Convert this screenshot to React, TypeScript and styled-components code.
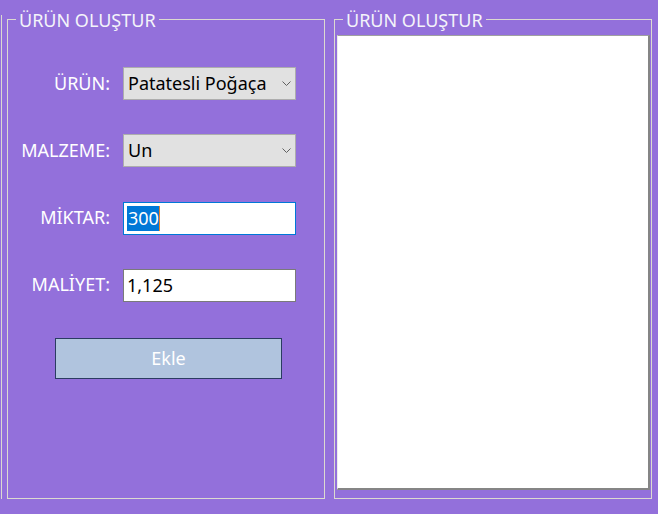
import React from "react";
import styled, { createGlobalStyle } from "styled-components";

const Global = createGlobalStyle`
  html, body { margin: 0; padding: 0; }
  body {
    background: #9370db;
    width: 658px;
    height: 514px;
    overflow: hidden;
    font-family: "Noto Sans", "Open Sans", sans-serif;
  }
`;

const Window = styled.div`
  display: flex;
  align-items: flex-start;
  padding-top: 19px;
  height: 514px;
  box-sizing: border-box;
`;

const ClippedEdge = styled.div`
  width: 1px;
  height: 484px;
  margin-top: -4px;
  border-right: 1px solid #dcdad0;
  margin-right: 5px;
`;

const GroupBox = styled.section<{ $gap?: number }>`
  position: relative;
  box-sizing: border-box;
  width: 318px;
  height: 480px;
  border: 1px solid #dcdad0;
  margin-right: ${(p) => p.$gap ?? 0}px;
  display: flex;
  flex-direction: column;
`;

const Legend = styled.span`
  position: absolute;
  top: -12px;
  left: 8px;
  padding: 0 3px;
  background: #9370db;
  color: #f4f4fa;
  font-size: 18px;
  line-height: 24px;
  white-space: nowrap;
`;

const Form = styled.div`
  display: grid;
  grid-template-columns: 102px 173px;
  grid-auto-rows: 33px;
  column-gap: 13px;
  row-gap: 34.33px;
  padding-top: 47px;
`;

const Label = styled.label`
  color: #ffffff;
  font-size: 18px;
  text-align: right;
  align-self: center;
  white-space: nowrap;
  margin-top: -2px;
`;

const Combo = styled.div`
  box-sizing: border-box;
  display: flex;
  align-items: center;
  justify-content: space-between;
  background: #e1e1e1;
  border: 1px solid #adadad;
  padding: 0 4px 0 4px;
  font-size: 18px;
  color: #000;
`;

const FieldText = styled.span`
  white-space: nowrap;
  margin-top: -1px;
`;

const TextBox = styled.div<{ $focused?: boolean }>`
  box-sizing: border-box;
  display: flex;
  align-items: center;
  background: #ffffff;
  border: 1px solid ${(p) => (p.$focused ? "#0078d7" : "#7a7a7a")};
  padding-left: 3px;
  font-size: 18px;
  color: #000;
`;

const Selection = styled.span`
  background: #0078d7;
  color: #ffffff;
  line-height: 25px;
  height: 25px;
  padding-left: 1px;
  border-right: 1px solid #e8832a;
`;

const ButtonRow = styled.div`
  display: flex;
  padding-left: 47px;
  margin-top: 36px;
`;

const Button = styled.button`
  box-sizing: border-box;
  width: 227px;
  height: 41px;
  background: #b0c4de;
  border: 1px solid #2b3c62;
  color: #ffffff;
  font-family: inherit;
  font-size: 18px;
  padding: 0;
`;

const ListBox = styled.div`
  box-sizing: border-box;
  flex: 1;
  margin: 15px 1px 8px 2px;
  background: #ffffff;
  border-top: 1px solid #a0a0a0;
  border-left: 1px solid #ececec;
  border-right: 2px solid #858585;
  border-bottom: 2px solid #858585;
`;

const Chevron = () => (
  <svg width="9" height="5" viewBox="0 0 9 5">
    <polyline points="0.5,0.5 4.5,4.5 8.5,0.5" fill="none" stroke="#606060" strokeWidth="1" />
  </svg>
);

export default function App() {
  return (
    <>
      <Global />
      <Window>
        <ClippedEdge />
        <GroupBox $gap={9}>
          <Legend>ÜRÜN OLUŞTUR</Legend>
          <Form>
            <Label>ÜRÜN:</Label>
            <Combo>
              <FieldText>Patatesli Poğaça</FieldText>
              <Chevron />
            </Combo>
            <Label>MALZEME:</Label>
            <Combo>
              <FieldText>Un</FieldText>
              <Chevron />
            </Combo>
            <Label>MİKTAR:</Label>
            <TextBox $focused>
              <Selection>300</Selection>
            </TextBox>
            <Label>MALİYET:</Label>
            <TextBox>
              <FieldText>1,125</FieldText>
            </TextBox>
          </Form>
          <ButtonRow>
            <Button>Ekle</Button>
          </ButtonRow>
        </GroupBox>
        <GroupBox>
          <Legend>ÜRÜN OLUŞTUR</Legend>
          <ListBox />
        </GroupBox>
      </Window>
    </>
  );
}
